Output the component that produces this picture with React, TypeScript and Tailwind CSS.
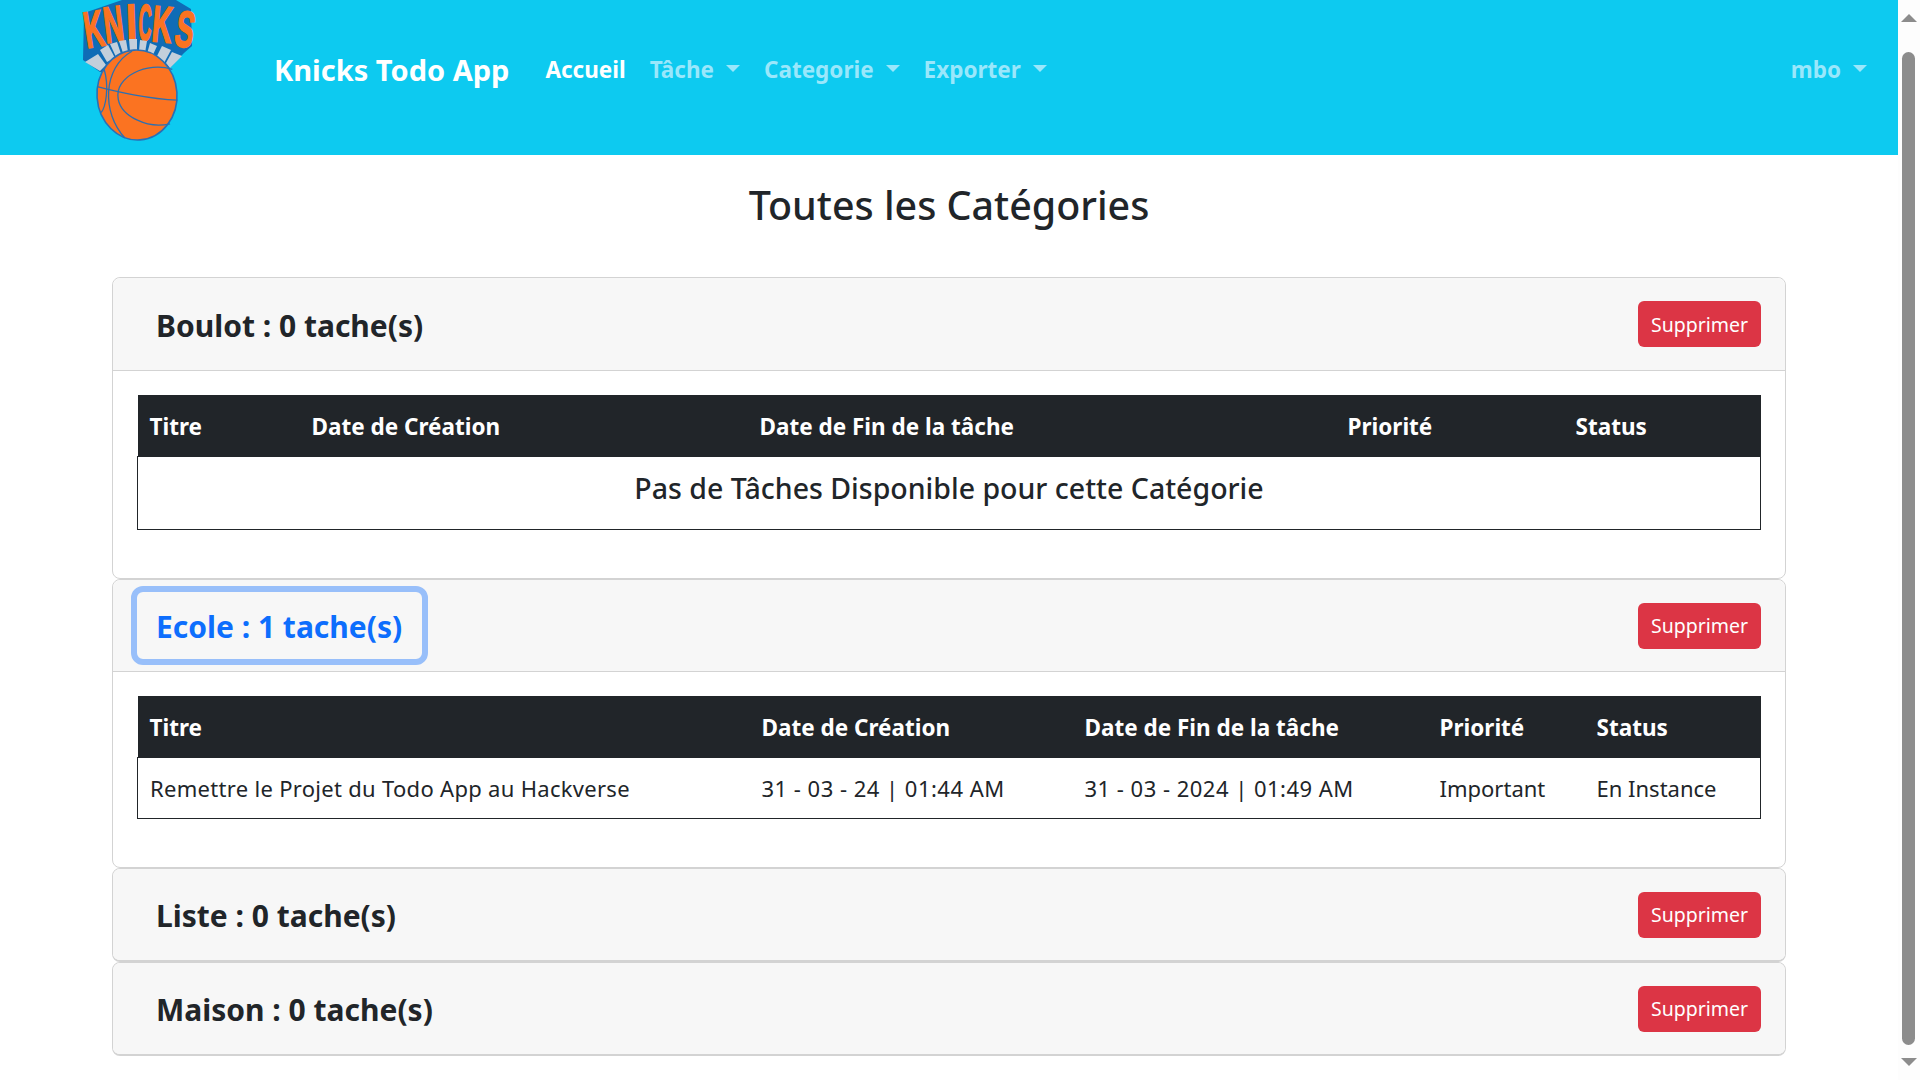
import React from "react";

const font = "font-['Noto_Sans','Open_Sans',sans-serif]";

const KnicksLogo = () => {
  const letters = [
    { c: "K", x: 27, y: 48, r: -9, sx: 0.54, sy: 1.02 },
    { c: "N", x: 46, y: 43, r: -7, sx: 0.54, sy: 1.02 },
    { c: "I", x: 67, y: 40, r: -2, sx: 0.74, sy: 1.02 },
    { c: "C", x: 78, y: 40, r: 2, sx: 0.36, sy: 1.02 },
    { c: "K", x: 91, y: 41, r: 5, sx: 0.55, sy: 1.02 },
    { c: "S", x: 113, y: 45, r: 10, sx: 0.56, sy: 1.02 },
  ];
  const stones = [
    "M25 62 L38 54 L46 65 L40 71 Z",
    "M40 50 L48 45 L55 58 L47 62 Z",
    "M50 44 L57 42 L61 54 L56 57 Z",
    "M59 41 L66 40 L68 52 L63 53 Z",
    "M69 39 L77 39 L77 51 L70 51 Z",
    "M80 40 L87 41 L85 53 L79 51 Z",
    "M90 43 L97 46 L92 57 L87 54 Z",
    "M102 46 L111 50 L104 63 L96 58 Z",
    "M112 52 L122 56 L110 68 L106 63 Z",
  ];
  return (
    <svg width="150" height="150" viewBox="0 0 150 150" className="shrink-0">
      <path d="M24 13 L62 0 L116 0 L131 9 L132 46 L124 53 L108 70 L40 72 L23 60 Z" fill="#0f6cb6" />
      <g fontFamily="'Liberation Sans', sans-serif" fontWeight="700" fontSize="50" fill="#fb7321" stroke="#fb7321" strokeWidth="1.8">
        {letters.map((l, i) => (
          <text key={i} transform={`translate(${l.x} ${l.y}) rotate(${l.r}) scale(${l.sx} ${l.sy})`}>
            {l.c}
          </text>
        ))}
      </g>
      {stones.map((d, i) => (
        <path key={i} d={d} fill="#c3cfdb" />
      ))}
      <g transform="rotate(-4 77 95)">
        <ellipse cx="77" cy="95" rx="40" ry="45" fill="#fb7321" stroke="#2a6fb5" strokeWidth="1.6" />
        <g fill="none" stroke="#2d6fb0" strokeWidth="1.3">
          <path d="M38 84 C55 90 90 100 117 103" />
          <path d="M75 51 C45 65 40 110 62 137" />
          <path d="M114 72 C90 62 55 75 58 98 C60 115 85 130 108 126" />
          <path d="M46 67 C50 85 45 105 40 110" />
        </g>
      </g>
    </svg>
  );
};

const Caret = () => (
  <span className="ml-[12px] mb-[3px] inline-block w-0 h-0 border-x-[7px] border-x-transparent border-t-[7px] border-t-[#9ae7fb]" />
);

const NavItem = ({ label, active, caret }: { label: string; active?: boolean; caret?: boolean }) => (
  <div className={`flex items-center px-3 font-bold text-[22.5px] ${active ? "text-white" : "text-[#9ae7fb]"}`}>
    {label}
    {caret && <Caret />}
  </div>
);

const Th = ({ children, className }: { children: React.ReactNode; className: string }) => (
  <th className={`px-3 pt-[3px] text-left font-bold text-[22.5px] text-white ${className}`}>{children}</th>
);

const CardHeader = ({ title, focused, small }: { title: string; focused?: boolean; small?: boolean }) => (
  <div className={`${small ? "h-[91px]" : "h-[92px]"} flex items-center justify-between pl-[18px] pr-[24px] bg-[#f7f7f7]`}>
    <div
      className={`h-[79px] flex items-center pl-[19px] pr-[20px] pt-[2px] rounded-[12px] font-bold text-[30px] border-[6px] ${
        focused ? "text-[#0d6efd] border-[#98bffa]" : "text-[#212529] border-transparent"
      }`}
    >
      {title}
    </div>
    <button className="h-[46px] w-[123px] pt-[1px] rounded-[6px] bg-[#dc3545] text-white text-[19.5px]">Supprimer</button>
  </div>
);

const App = () => {
  return (
    <div className={`flex h-[1080px] overflow-hidden bg-white ${font}`}>
      <div className="w-[1898px] shrink-0">
        <nav className="h-[155px] bg-[#0dcaf0] flex items-start">
          <div className="ml-[60px] w-[150px]">
            <KnicksLogo />
          </div>
          <div className="ml-[64px] mt-[47px] flex h-[46px] flex-1 items-center">
            <div className="font-bold text-[29px] text-white mr-[24px]">Knicks Todo App</div>
            <NavItem label="Accueil" active />
            <NavItem label="Tâche" caret />
            <NavItem label="Categorie" caret />
            <NavItem label="Exporter" caret />
            <div className="ml-auto pr-[19px]">
              <NavItem label="mbo" caret />
            </div>
          </div>
        </nav>
        <h1 className="h-[122px] pb-[20px] flex items-center justify-center font-medium text-[39.4px] text-[#212529]">
          Toutes les Catégories
        </h1>
        <div className="mx-[112px] flex flex-col">
          <section className="h-[302px] rounded-[8px] border border-[#d3d3d3]">
            <div className="rounded-t-[8px] overflow-hidden border-b border-[#d3d3d3]">
              <CardHeader title="Boulot : 0 tache(s)" />
            </div>
            <div className="px-[24px] pt-[24px]">
              <table className="w-full table-fixed border-collapse">
                <thead>
                  <tr className="h-[61px] bg-[#212529]">
                    <Th className="w-[162px]">Titre</Th>
                    <Th className="w-[448px]">Date de Création</Th>
                    <Th className="w-[588px]">Date de Fin de la tâche</Th>
                    <Th className="w-[228px]">Priorité</Th>
                    <Th className="w-auto">Status</Th>
                  </tr>
                </thead>
                <tbody>
                  <tr className="h-[73px]">
                    <td colSpan={5} className="pb-[9px] border border-[#212529] text-center font-medium text-[28.5px] text-[#212529]">
                      Pas de Tâches Disponible pour cette Catégorie
                    </td>
                  </tr>
                </tbody>
              </table>
            </div>
          </section>
          <section className="h-[289px] rounded-[8px] border border-[#d3d3d3]">
            <div className="rounded-t-[8px] overflow-hidden border-b border-[#d3d3d3]">
              <CardHeader title="Ecole : 1 tache(s)" focused small />
            </div>
            <div className="px-[24px] pt-[24px]">
              <table className="w-full table-fixed border-collapse">
                <thead>
                  <tr className="h-[61px] bg-[#212529]">
                    <Th className="w-[612px]">Titre</Th>
                    <Th className="w-[323px]">Date de Création</Th>
                    <Th className="w-[355px]">Date de Fin de la tâche</Th>
                    <Th className="w-[157px]">Priorité</Th>
                    <Th className="w-auto">Status</Th>
                  </tr>
                </thead>
                <tbody>
                  <tr className="h-[61px] border border-[#212529] text-[22px] text-[#212529]">
                    <td className="px-3 pt-[2px] tracking-[0.3px]">Remettre le Projet du Todo App au Hackverse</td>
                    <td className="px-3 pt-[2px] tracking-[0.48px]">31 - 03 - 24 | 01:44 AM</td>
                    <td className="px-3 pt-[2px] tracking-[0.48px]">31 - 03 - 2024 | 01:49 AM</td>
                    <td className="px-3 pt-[2px]">Important</td>
                    <td className="px-3 pt-[2px]">En Instance</td>
                  </tr>
                </tbody>
              </table>
            </div>
          </section>
          <section className="rounded-[8px] border border-b-2 border-[#d3d3d3] overflow-hidden">
            <CardHeader title="Liste : 0 tache(s)" small />
          </section>
          <section className="rounded-[8px] border border-b-2 border-[#d3d3d3] overflow-hidden">
            <CardHeader title="Maison : 0 tache(s)" small />
          </section>
        </div>
      </div>
      {/* fake scrollbar */}
      <div className="relative w-[22px] bg-[#fdfdfd]">
        <div className="absolute left-[3px] top-[14px] w-0 h-0 border-x-[8px] border-x-transparent border-b-[8px] border-b-[#8c8c8c]" />
        <div className="absolute left-[4px] top-[52px] w-[13px] h-[993px] rounded-full bg-[#8c8c8c]" />
        <div className="absolute left-[3px] top-[1058px] w-0 h-0 border-x-[8px] border-x-transparent border-t-[8px] border-t-[#8c8c8c]" />
      </div>
    </div>
  );
};

export default App;
